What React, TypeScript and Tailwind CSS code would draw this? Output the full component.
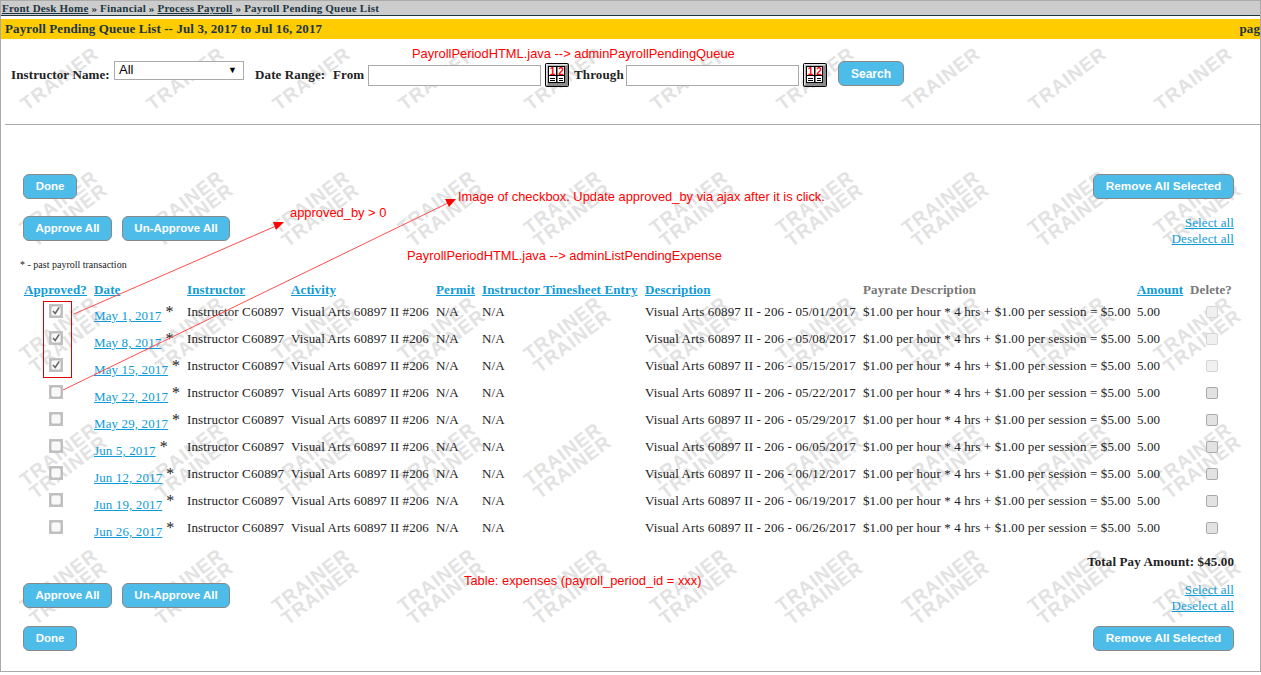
import React from "react";

const serif = "font-['Liberation_Serif',serif]";

function Btn({ children, w, size }: { children: React.ReactNode; w: string; size?: string }) {
  return (
    <button
      className={`${w} ${size ?? "text-[11.5px]"} h-[25px] shrink-0 rounded-[6px] border border-[#888] bg-[#4dbce9] pt-[1px] text-center font-['Liberation_Sans',sans-serif] font-bold tracking-normal text-white`}
    >
      {children}
    </button>
  );
}

function Calendar() {
  return (
    <svg width="24" height="24" viewBox="0 0 24 24" className="shrink-0">
      <rect x="0.5" y="0.5" width="23" height="23" rx="1" fill="#8a8a8a" stroke="#000" />
      <rect x="1" y="1" width="21" height="1.5" fill="#e4e4e4" />
      <rect x="1" y="1" width="1.5" height="21" fill="#e4e4e4" />
      <rect x="3" y="3" width="17" height="17" fill="#000" />
      <rect x="4" y="4" width="15" height="15" fill="#fff" />
      <rect x="11" y="3" width="1.5" height="17" fill="#000" />
      <text x="7.5" y="11.5" textAnchor="middle" fontFamily="'Liberation Sans',sans-serif" fontWeight="700" fontSize="10" fill="#f00" letterSpacing="0">1</text>
      <text x="16" y="11.5" textAnchor="middle" fontFamily="'Liberation Sans',sans-serif" fontWeight="700" fontSize="10" fill="#f00" letterSpacing="0">2</text>
      <rect x="4" y="12" width="15" height="1" fill="#000" />
      <rect x="5" y="15" width="5" height="1" fill="#000" />
      <rect x="5" y="17" width="5" height="1" fill="#000" />
      <rect x="14" y="15" width="4" height="1" fill="#000" />
      <rect x="14" y="17" width="4" height="1" fill="#000" />
    </svg>
  );
}

function ImgCheck({ checked }: { checked: boolean }) {
  return (
    <svg width="14" height="14" viewBox="0 0 14 14" className="block">
      <rect width="14" height="14" fill="#c2c2c2" />
      <rect x="2" y="2" width="10" height="10" rx="2" fill="#f8f8f8" stroke="#a8a8a8" strokeWidth="0.6" />
      {checked && <path d="M4 7 L6.2 9.5 L10.2 3.4" fill="none" stroke="#666" strokeWidth="1.6" />}
    </svg>
  );
}

const rows: { date: string; desc: string }[] = [
  { date: "May 1, 2017", desc: "05/01/2017" },
  { date: "May 8, 2017", desc: "05/08/2017" },
  { date: "May 15, 2017", desc: "05/15/2017" },
  { date: "May 22, 2017", desc: "05/22/2017" },
  { date: "May 29, 2017", desc: "05/29/2017" },
  { date: "Jun 5, 2017", desc: "06/05/2017" },
  { date: "Jun 12, 2017", desc: "06/12/2017" },
  { date: "Jun 19, 2017", desc: "06/19/2017" },
  { date: "Jun 26, 2017", desc: "06/26/2017" },
];

const marks: number[] = [];
for (let i = 0; i < 50; i++) marks.push(i);

function Watermarks() {
  return (
    <div className="pointer-events-none absolute left-[19px] top-[44px] grid select-none auto-rows-[126px] grid-cols-[repeat(10,126px)]">
      {marks.map((i) => (
        <div key={i} className="h-[126px] w-[126px]">
          <div className={`flex ${i < 10 ? "h-[68px] w-[80px]" : "h-[75px] w-[88px]"} items-center justify-center`}>
            <div className="-rotate-[37deg] whitespace-nowrap text-center font-['Liberation_Sans',sans-serif] text-[19px] font-bold leading-[16px] tracking-[1px] text-[#e2e2e2]">
              TRAINER
              {i >= 10 && (
                <>
                  <br />
                  TRAINER
                </>
              )}
            </div>
          </div>
        </div>
      ))}
    </div>
  );
}

function Annotations() {
  const note = "absolute font-['Liberation_Sans',sans-serif] text-[12.9px] tracking-normal leading-[16px] text-[#ff0000] whitespace-nowrap";
  return (
    <>
      <div className={`${note} left-[411px] top-[45px]`}>PayrollPeriodHTML.java --&gt; adminPayrollPendingQueue</div>
      <div className={`${note} left-[289px] top-[204px]`}>approved_by &gt; 0</div>
      <div className={`${note} left-[457px] top-[188px]`}>Image of checkbox. Update approved_by via ajax after it is click.</div>
      <div className={`${note} left-[406px] top-[247px]`}>PayrollPeriodHTML.java --&gt; adminListPendingExpense</div>
      <div className={`${note} left-[463px] top-[572px]`}>Table: expenses (payroll_period_id = xxx)</div>
      <div className="absolute left-[42px] top-[300px] h-[77px] w-[29px] border border-[#e00000]" />
      <svg className="pointer-events-none absolute left-0 top-0" width="1261" height="675">
        <line x1="73" y1="313" x2="275" y2="225" stroke="#ff4d4d" strokeWidth="1" />
        <polygon points="283,221 272,221 275,229" fill="#ff0000" />
        <line x1="62" y1="389" x2="447" y2="202" stroke="#ff4d4d" strokeWidth="1" />
        <polygon points="455,198 444,198 448,206" fill="#ff0000" />
      </svg>
    </>
  );
}

const linkCls = "text-[#0e9bd8] underline";
const thLink = `${linkCls} font-bold`;

export default function App() {
  return (
    <div className={`relative h-[672px] w-[1261px] overflow-hidden border border-[#aaa] bg-white ${serif} text-[13px] tracking-[0.12px] text-[#222]`}>
      <Watermarks />
      <div className="relative">
        <div className="flex h-[15px] items-center border-b border-[#1c3542] bg-[#cccccc] pl-[1px] text-[11px] font-bold leading-[14px] tracking-[0.2px] text-[#1c3542]">
          <a className="underline">Front Desk Home</a>&nbsp;» Financial »&nbsp;<a className="underline">Process Payroll</a>&nbsp;» Payroll Pending Queue List
        </div>
        <div className="mt-[3px] flex h-[20px] items-center justify-between overflow-hidden bg-[#ffcc00] pl-[4px] font-bold tracking-[0.1px] text-[#1c3542]">
          <span>Payroll Pending Queue List -- Jul 3, 2017 to Jul 16, 2017</span>
          <span>pag</span>
        </div>

        <div className="h-[85px] pl-[10px] pt-[23px] font-bold">
          <div className="flex h-[26px] items-center">
            <span className="w-[103px] whitespace-nowrap">Instructor Name:</span>
            <div className="mb-[9px] flex h-[19px] w-[130px] items-start justify-between border border-[#aaa] bg-white pl-[4px] pr-[6px] font-['Liberation_Sans',sans-serif] text-[13px] font-normal leading-[15px] tracking-normal text-black">
              All <span className="text-[9px] leading-[16px]">▼</span>
            </div>
            <span className="ml-[11px] w-[78px] whitespace-nowrap">Date Range:</span>
            <span className="w-[35px]">From</span>
            <div className="h-[21px] w-[173px] border border-[#aaa] bg-white" />
            <div className="ml-[4px]"><Calendar /></div>
            <span className="ml-[5px] w-[52px]">Through</span>
            <div className="h-[21px] w-[173px] border border-[#aaa] bg-white" />
            <div className="ml-[4px]"><Calendar /></div>
            <div className="mb-[3px] ml-[11px]"><Btn w="w-[66px]" size="text-[12px]">Search</Btn></div>
          </div>
        </div>

        <div className="ml-[4px] h-[1px] bg-[#aaa]" />

        <div className="pl-[22px] pr-[26px]">
          <div className="mt-[49px] flex justify-between">
            <Btn w="w-[54px]">Done</Btn>
            <Btn w="w-[141px]" size="text-[11.8px]">Remove All Selected</Btn>
          </div>
          <div className="mt-[17px] flex h-[25px] justify-between">
            <div className="flex gap-[10px]">
              <Btn w="w-[89px]">Approve All</Btn>
              <Btn w="w-[108px]">Un-Approve All</Btn>
            </div>
            <div className="-mt-[1px] flex flex-col items-end leading-[16px]">
              <a className={linkCls}>Select all</a>
              <a className={linkCls}>Deselect all</a>
            </div>
          </div>
          <div className="-ml-[3px] mt-[18px] h-[12px] text-[10px] leading-[12px] tracking-normal">* - past payroll transaction</div>

          <table className="-ml-[1px] mt-[11px] w-[1212px] table-fixed border-collapse">
            <colgroup>
              <col className="w-[70px]" />
              <col className="w-[93px]" />
              <col className="w-[104px]" />
              <col className="w-[145px]" />
              <col className="w-[46px]" />
              <col className="w-[163px]" />
              <col className="w-[218px]" />
              <col className="w-[274px]" />
              <col className="w-[53px]" />
              <col className="w-[46px]" />
            </colgroup>
            <thead>
              <tr className="h-[16px] text-left leading-[16px]">
                <th className="px-[2px] font-bold"><a className={thLink}>Approved?</a></th>
                <th className="px-[2px]"><a className={thLink}>Date</a></th>
                <th className="px-[2px]"><a className={thLink}>Instructor</a></th>
                <th className="px-[2px]"><a className={thLink}>Activity</a></th>
                <th className="px-[2px]"><a className={thLink}>Permit</a></th>
                <th className="whitespace-nowrap px-[2px]"><a className={thLink}>Instructor Timesheet Entry</a></th>
                <th className="px-[2px]"><a className={thLink}>Description</a></th>
                <th className="px-[2px] text-[#777]">Payrate Description</th>
                <th className="px-[2px]"><a className={thLink}>Amount</a></th>
                <th className="px-[2px] text-[#777]">Delete?</th>
              </tr>
            </thead>
            <tbody>
              {rows.map((r, i) => (
                <tr key={r.date} className="h-[27px] whitespace-nowrap align-top leading-[16px]">
                  <td className="px-[2px] pt-[6px]"><div className="ml-[25px]"><ImgCheck checked={i < 3} /></div></td>
                  <td className="px-[2px] pt-[6px]">
                    <div className="flex items-start gap-[4px]">
                      <a className={`${linkCls} mt-[4px]`}>{r.date}</a>
                      <span className="text-[16px] leading-[16px]">*</span>
                    </div>
                  </td>
                  <td className="px-[2px] pt-[6px]">Instructor C60897</td>
                  <td className="px-[2px] pt-[6px]">Visual Arts 60897 II #206</td>
                  <td className="px-[2px] pt-[6px]">N/A</td>
                  <td className="px-[2px] pt-[6px]">N/A</td>
                  <td className="px-[2px] pt-[6px]">Visual Arts 60897 II - 206 - {r.desc}</td>
                  <td className="px-[2px] pt-[6px]">$1.00 per hour * 4 hrs + $1.00 per session = $5.00</td>
                  <td className="px-[2px] pt-[6px]">5.00</td>
                  <td className="px-[2px] pt-[6px]">
                    <div className={`ml-[16px] mt-[2px] h-[12px] w-[12px] rounded-[2px] border ${i < 3 ? "border-[#d5d5d5] bg-[#f0f0f0]" : "border-[#aaa] bg-[#e2e2e2]"}`} />
                  </td>
                </tr>
              ))}
            </tbody>
          </table>

          <div className="mt-[13px] h-[16px] text-right font-bold leading-[16px]">Total Pay Amount: $45.00</div>
          <div className="mt-[13px] flex h-[43px] justify-between">
            <div className="flex items-start gap-[10px]">
              <Btn w="w-[89px]">Approve All</Btn>
              <Btn w="w-[108px]">Un-Approve All</Btn>
            </div>
            <div className="-mt-[1px] flex flex-col items-end leading-[16px]">
              <a className={linkCls}>Select all</a>
              <a className={linkCls}>Deselect all</a>
            </div>
          </div>
          <div className="flex justify-between">
            <Btn w="w-[54px]">Done</Btn>
            <Btn w="w-[141px]" size="text-[11.8px]">Remove All Selected</Btn>
          </div>
        </div>
      </div>
      <Annotations />
    </div>
  );
}
